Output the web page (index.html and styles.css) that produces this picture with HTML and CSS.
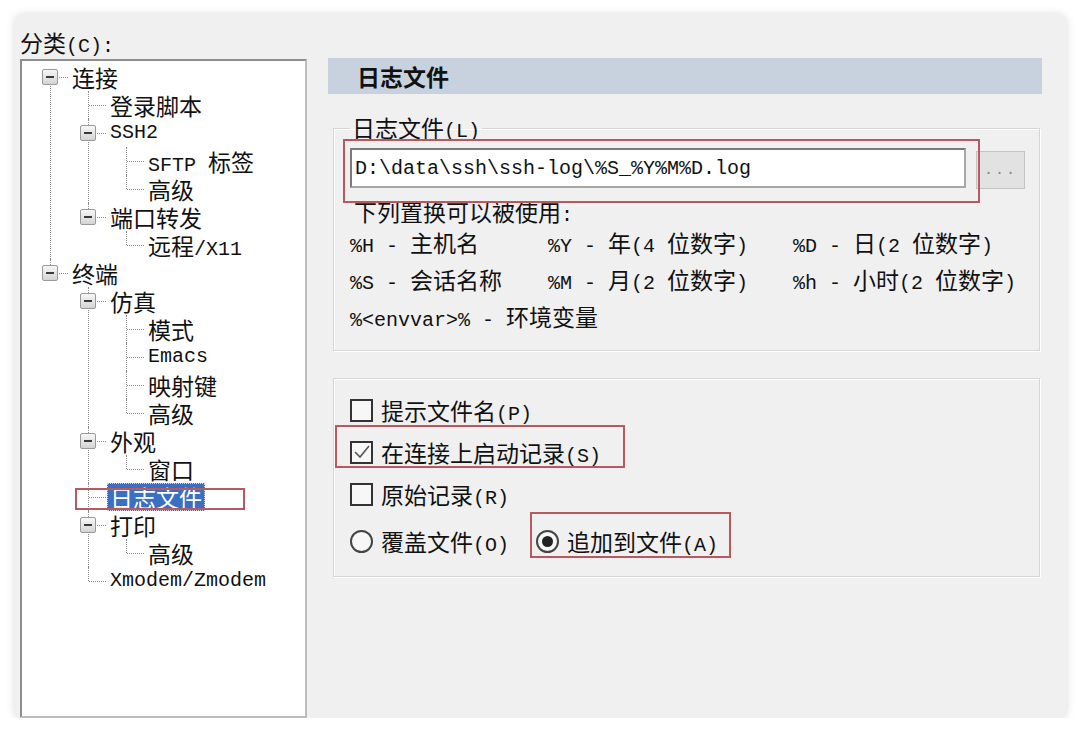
FILE: index.html
```html
<!DOCTYPE html>
<html>
  <head>
    <meta charset="utf-8">
    <title>会话选项 - 日志文件</title>
    <link rel="stylesheet" href="styles.css">
  </head>
  <body>
    <div class="dialog">
      <div class="category">
        <div class="caption">分类<span class="en">(C):</span></div>
        <div class="tree-box">
          <ul class="tree">
            <li><span class="exp"></span><span class="node">连接</span>
              <ul>
                <li><span class="node">登录脚本</span></li>
                <li><span class="exp"></span><span class="node en">SSH2</span>
                  <ul>
                    <li><span class="node"><span class="en">SFTP </span>标签</span></li>
                    <li><span class="node">高级</span></li>
                  </ul>
                </li>
                <li><span class="exp"></span><span class="node">端口转发</span>
                  <ul>
                    <li><span class="node">远程<span class="en">/X11</span></span></li>
                  </ul>
                </li>
              </ul>
            </li>
            <li><span class="exp"></span><span class="node">终端</span>
              <ul>
                <li><span class="exp"></span><span class="node">仿真</span>
                  <ul>
                    <li><span class="node">模式</span></li>
                    <li><span class="node en">Emacs</span></li>
                    <li><span class="node">映射键</span></li>
                    <li><span class="node">高级</span></li>
                  </ul>
                </li>
                <li><span class="exp"></span><span class="node">外观</span>
                  <ul>
                    <li><span class="node">窗口</span></li>
                  </ul>
                </li>
                <li><span class="node sel">日志文件</span><span class="mark mark-tree"></span></li>
                <li><span class="exp"></span><span class="node">打印</span>
                  <ul>
                    <li><span class="node">高级</span></li>
                  </ul>
                </li>
                <li><span class="node en">Xmodem/Zmodem</span></li>
              </ul>
            </li>
          </ul>
        </div>
      </div>

      <div class="panel">
        <div class="panel-title">日志文件</div>

        <fieldset class="group">
          <legend>日志文件<span class="en">(L)</span></legend>
          <div class="path-row">
            <input class="path" type="text" value="D:\data\ssh\ssh-log\%S_%Y%M%D.log">
            <button class="browse">...</button>
            <span class="mark mark-path"></span>
          </div>
          <div class="hint">下列置换可以被使用<span class="en">:</span></div>
          <div class="vars">
            <div><span class="en">%H - </span>主机名</div>
            <div><span class="en">%Y - </span>年<span class="en">(4 </span>位数字<span class="en">)</span></div>
            <div><span class="en">%D - </span>日<span class="en">(2 </span>位数字<span class="en">)</span></div>
            <div><span class="en">%S - </span>会话名称</div>
            <div><span class="en">%M - </span>月<span class="en">(2 </span>位数字<span class="en">)</span></div>
            <div><span class="en">%h - </span>小时<span class="en">(2 </span>位数字<span class="en">)</span></div>
            <div class="wide"><span class="en">%&lt;envvar&gt;% - </span>环境变量</div>
          </div>
        </fieldset>

        <fieldset class="group options">
          <div class="opt">
            <span class="check"></span>
            <span>提示文件名<span class="en">(P)</span></span>
          </div>
          <div class="opt">
            <span class="check">
              <svg width="19" height="19" viewBox="0 0 19 19"><polyline points="3,9 8,14 17,3" fill="none" stroke="#555" stroke-width="1.6"/></svg>
            </span>
            <span>在连接上启动记录<span class="en">(S)</span></span>
            <span class="mark mark-start"></span>
          </div>
          <div class="opt">
            <span class="check"></span>
            <span>原始记录<span class="en">(R)</span></span>
          </div>
          <div class="opt radios">
            <div class="radio-item">
              <span class="radio"></span>
              <span>覆盖文件<span class="en">(O)</span></span>
            </div>
            <div class="radio-item">
              <span class="radio on"></span>
              <span>追加到文件<span class="en">(A)</span></span>
              <span class="mark mark-append"></span>
            </div>
          </div>
        </fieldset>
      </div>
    </div>
  </body>
</html>
```

FILE: styles.css
```css
body {
  margin: 0;
  background-color: #ffffff;
  font-family: "Noto Sans CJK SC", sans-serif;
  font-size: 23px;
  color: #111111;
}
.en {
  font-family: "Liberation Mono", monospace;
  font-size: 20px;
  line-height: 1;
}
.dialog {
  box-sizing: border-box;
  margin: 14px 0 0 15px;
  width: 1051px;
  height: 704px;
  padding: 15px 0 0 5px;
  display: flex;
  background: #f0f0f0;
  border-radius: 8px;
  box-shadow: 0 1px 10px rgba(0, 0, 0, 0.16);
  overflow: hidden;
}

/* left: category tree */
.category {
  width: 287px;
  display: flex;
  flex-direction: column;
}
.caption {
  height: 28px;
  line-height: 26px;
  margin-bottom: 2px;
}
.tree-box {
  flex: 1;
  background: #ffffff;
  border: 2px solid #8e8e8e;
  border-right-color: #bdbdbd;
  border-bottom-color: #bdbdbd;
}
.tree,
.tree ul {
  list-style: none;
  margin: 0;
}
.tree {
  padding: 2px 0 0 28px;
}
.tree ul {
  padding: 0 0 0 16px;
}
.tree li {
  position: relative;
  padding-left: 22px;
}
.tree li::before {
  content: "";
  position: absolute;
  left: 0;
  top: 0;
  bottom: 0;
  border-left: 1px dotted #8a8a8a;
}
.tree li:last-child::before {
  bottom: auto;
  height: 14px;
}
.tree > li:first-child::before {
  top: 14px;
}
.tree li::after {
  content: "";
  position: absolute;
  left: 1px;
  top: 14px;
  width: 17px;
  border-top: 1px dotted #8a8a8a;
}
.node {
  display: block;
  width: max-content;
  height: 28px;
  line-height: 28px;
  padding: 0 3px;
  margin-left: -3px;
}
.node.sel {
  background: #3a6fc2;
  color: #ffffff;
  outline: 1px dotted #c8d4ea;
  outline-offset: -1px;
}
.exp {
  position: absolute;
  left: -8px;
  top: 6px;
  width: 14px;
  height: 14px;
  border: 1px solid #9a9a9a;
  border-radius: 2px;
  background: linear-gradient(#f6f6f6, #d4d4d4);
  z-index: 1;
}
.exp::before {
  content: "";
  position: absolute;
  left: 3px;
  right: 3px;
  top: 6px;
  border-top: 2px solid #3a3a3a;
}

/* red annotation boxes */
.mark {
  position: absolute;
  border: 2px solid #b65a60;
  pointer-events: none;
}
.mark-tree {
  left: -13px;
  top: 5px;
  width: 166px;
  height: 18px;
}
.mark-path {
  left: -7px;
  top: -9px;
  width: 633px;
  height: 60px;
}
.mark-start {
  left: -15px;
  top: -6px;
  width: 286px;
  height: 39px;
}
.mark-append {
  left: -6px;
  top: -8px;
  width: 197px;
  height: 42px;
}

/* right: settings panel */
.panel {
  width: 714px;
  margin: 29px 0 0 21px;
}
.panel-title {
  height: 36px;
  line-height: 36px;
  padding-left: 29px;
  background: #c8d2de;
  font-weight: bold;
}
.group {
  margin: 20px 2px 0 5px;
  padding: 6px 14px 14px 16px;
  border: 1px solid #d6d6d6;
  box-shadow: inset 1px 1px 0 #ffffff, 1px 1px 0 #ffffff;
}
.group legend {
  padding: 0 2px;
  line-height: 26px;
}
.path-row {
  position: relative;
  display: flex;
}
.path {
  box-sizing: border-box;
  width: 616px;
  height: 40px;
  padding: 0 3px;
  border: 2px solid #7b7b7b;
  border-right-color: #a8a8a8;
  border-bottom-color: #a8a8a8;
  background: #ffffff;
  font-family: "Liberation Mono", monospace;
  font-size: 20px;
  color: #111;
}
.browse {
  width: 49px;
  height: 38px;
  margin: 3px 0 0 10px;
  padding: 0;
  border: 1px solid #c4c4c4;
  background: #e2e2e2;
  color: #888;
  font-family: "Liberation Mono", monospace;
  font-size: 15px;
  letter-spacing: 2px;
}
.hint {
  margin-top: 8px;
  padding-left: 4px;
  height: 28px;
  line-height: 28px;
}
.vars {
  display: grid;
  grid-template-columns: 198px 245px auto;
  grid-auto-rows: 37px;
  line-height: 34px;
}
.vars .wide {
  grid-column: 1 / 4;
}
.options {
  margin-top: 27px;
  padding-top: 10px;
  padding-bottom: 14px;
}
.opt {
  position: relative;
  display: flex;
  align-items: center;
  height: 42px;
}
.check {
  box-sizing: border-box;
  width: 23px;
  height: 23px;
  margin-right: 8px;
  border: 2px solid #333;
  background: #f7f7f7;
  display: flex;
  align-items: center;
  justify-content: center;
}
.radios {
  margin-top: 5px;
}
.radio-item {
  position: relative;
  display: flex;
  align-items: center;
  height: 42px;
  margin-right: 27px;
}
.radio {
  box-sizing: border-box;
  width: 23px;
  height: 23px;
  margin-right: 8px;
  border: 2px solid #444;
  border-radius: 50%;
  background: #f7f7f7;
  display: flex;
  align-items: center;
  justify-content: center;
}
.radio.on::after {
  content: "";
  width: 11px;
  height: 11px;
  border-radius: 50%;
  background: #222;
}
```
